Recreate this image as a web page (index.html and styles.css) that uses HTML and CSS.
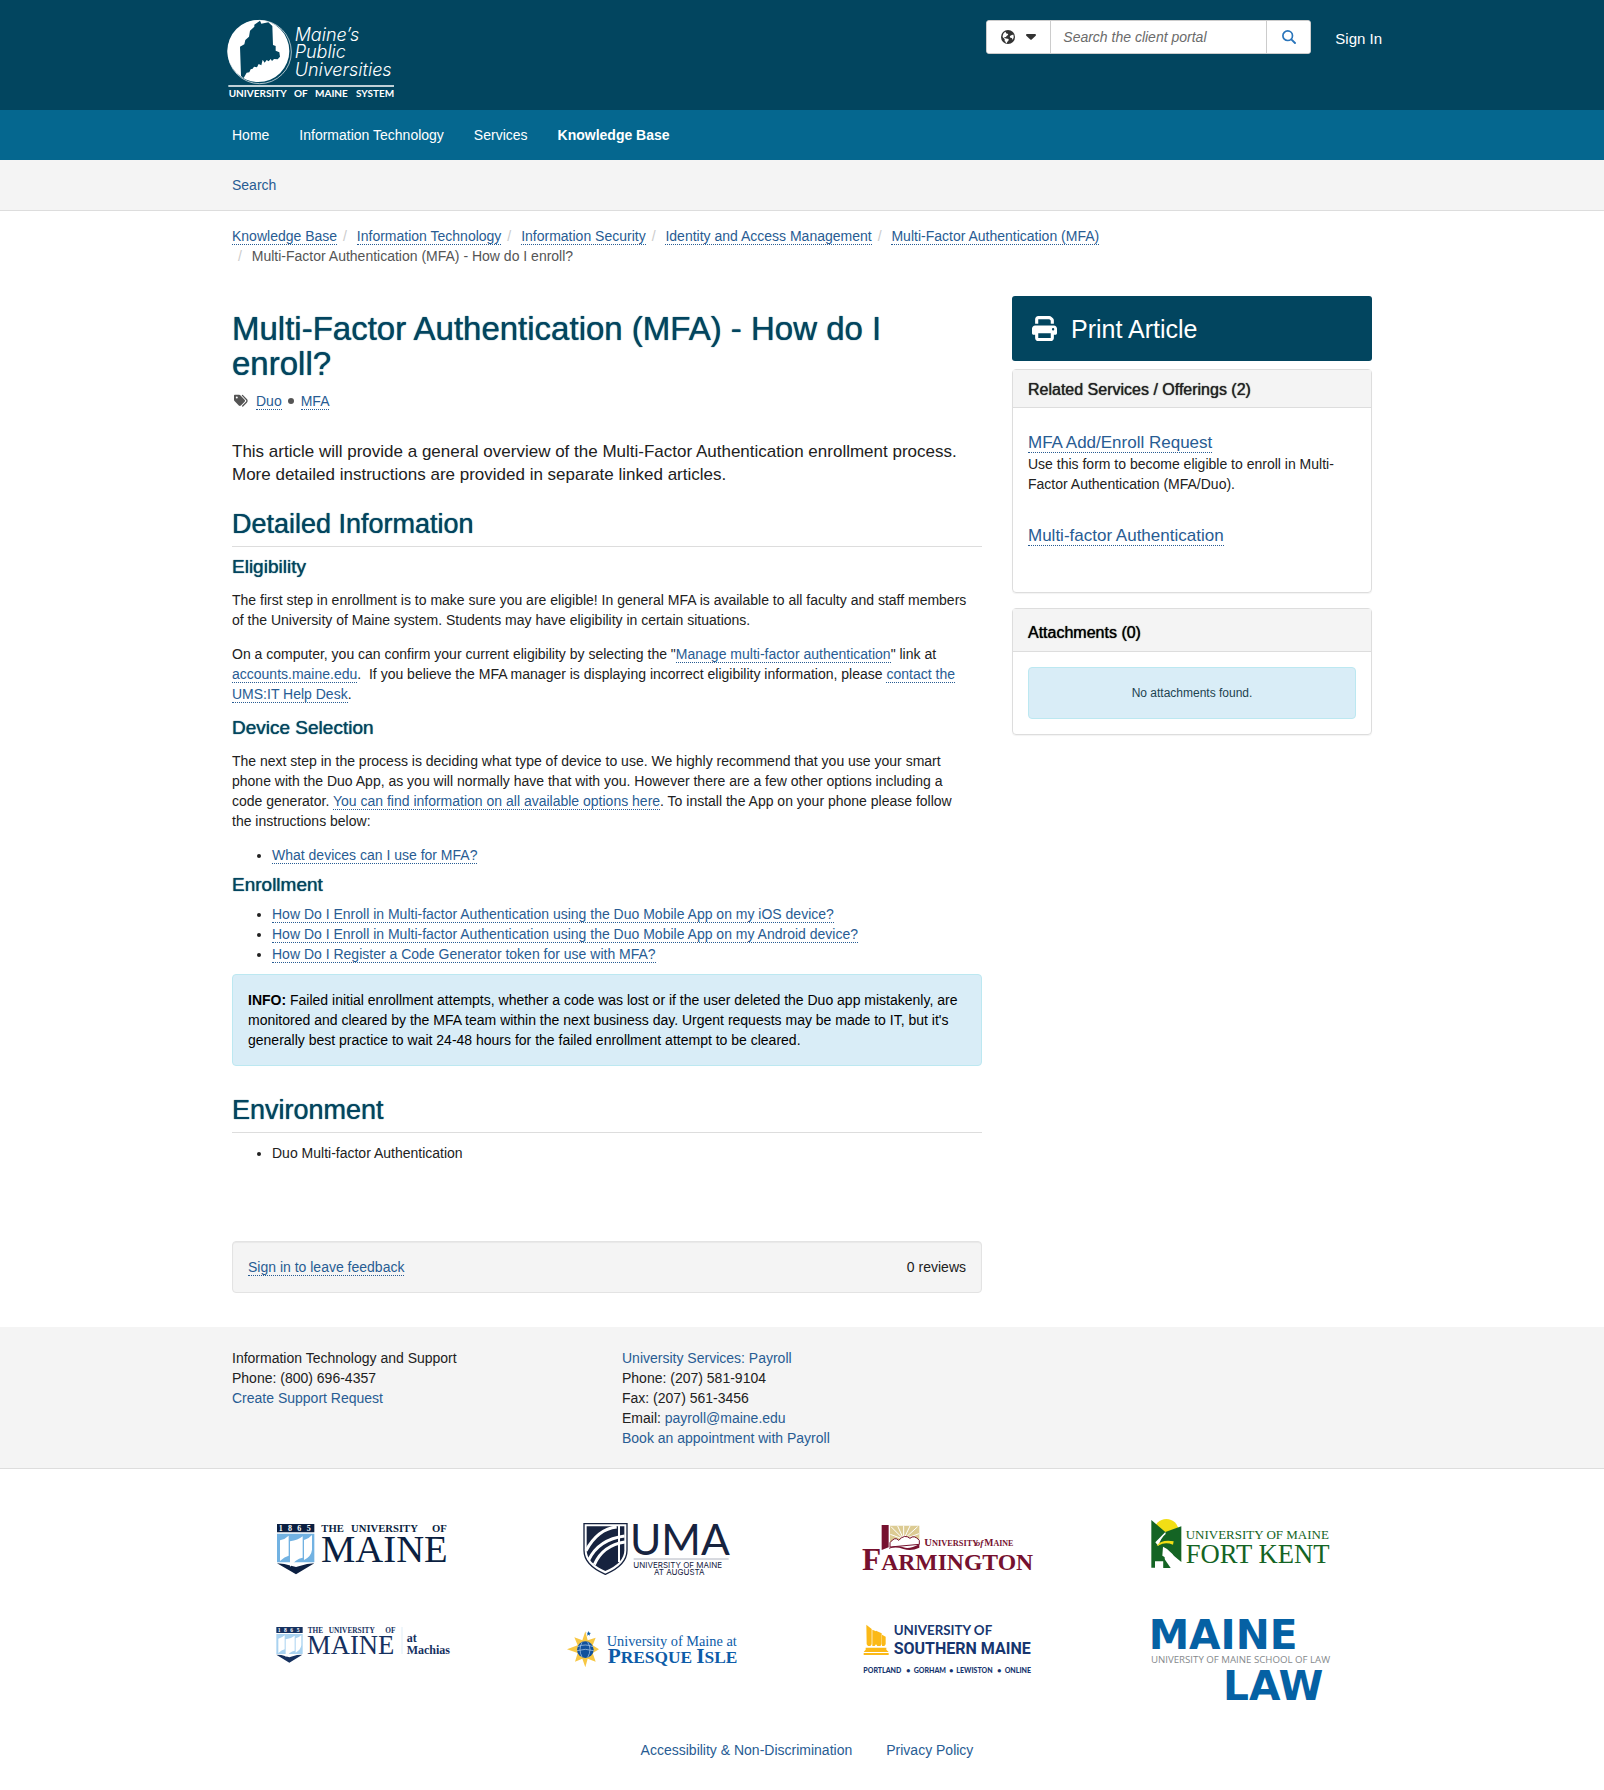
FILE: index.html
```html
<!DOCTYPE html>
<html lang="en">
<head>
<meta charset="utf-8">
<meta name="viewport" content="width=device-width, initial-scale=1">
<title>Article - Multi-Factor Authentication (MFA) - How do I enroll?</title>
<link rel="stylesheet" href="styles.css">
</head>
<body>
<header class="site-header">
  <div class="container header-row">
    <a class="brand" href="#" aria-label="University of Maine System">
      <svg width="168" height="80" viewBox="51 57 504 240">
        <circle cx="149" cy="156" r="95" fill="none" stroke="#fff" stroke-width="2"/>
        <circle cx="145" cy="153" r="93" fill="#fff"/>
        <path fill="#02455f" d="M150 62l4 9 21-4 12 11 2 57 8 3v14l11 5 2 13-7 8-11-1-6 6-4-6-6 7-6-4-6 8-6-9-4 17-8-4-5 10-9-2-4 6-6 2-4 9-8 1-9 16-8-6-3-88 13-7 3-13 11-10 3-18 13-12v-6z"/>
        <g class="wm-script">
          <text x="254" y="123">Maine’s</text>
          <text x="254" y="175">Public</text>
          <text x="254" y="228">Universities</text>
        </g>
        <path stroke="#fff" stroke-width="5" d="M55 258h497"/>
        <g class="wm-system">
          <text x="56" y="291">UNIVERSITY</text>
          <text x="252" y="291">OF</text>
          <text x="315" y="291">MAINE</text>
          <text x="438" y="291">SYSTEM</text>
        </g>
      </svg>
    </a>
    <div class="header-tools">
      <form class="search" role="search">
        <button class="search-filter" type="button" aria-label="Filter your search by category">
          <svg width="14" height="14" viewBox="0 0 512 512"><circle cx="256" cy="256" r="256" fill="#333"/><path fill="#fff" d="M58 258l64 62c8 8 12 18 12 30v40c0 14 8 26 20 32s20 18 20 34v10l40 20c0-40 12-50 30-66 26-22 40-40 40-60 0-28-20-40-44-42l-60-10c-14-6-26-20-44-20-16 0-22-12-12-22 12-12 28-20 40-8 10 10 26 6 26-10 0-24 10-28 28-38 18-12 34-24 40-40 8-20 0-36-20-36h-26l-28-20-18-54C110 80 60 150 58 258zM372 190c-22 4-40 22-48 44-6 22 10 44 34 48l28 6c18 4 26 18 24 34l-4 40c30-26 52-60 58-106 2-30-4-60-18-90l-40 20z"/></svg>
          <svg width="10" height="6" viewBox="0 0 10 6"><path fill="#333" d="M1 0h8a1 1 0 0 1 .7 1.700L5.700 5.500a1 1 0 0 1-1.400 0L.3 1.700A1 1 0 0 1 1 0z"/></svg>
        </button>
        <input class="search-input" type="text" placeholder="Search the client portal" aria-label="Search the client portal">
        <button class="search-go" type="submit" aria-label="Search">
          <svg width="14" height="14" viewBox="0 0 14 14" fill="none" stroke="#2a75bb" stroke-linecap="round"><circle cx="5.700" cy="5.700" r="4.800" stroke-width="1.700"/><path stroke-width="1.900" d="M9.300 9.300l3.700 3.700"/></svg>
        </button>
      </form>
      <a class="sign-in" href="#">Sign In</a>
    </div>
  </div>
</header>
<nav class="main-nav">
  <div class="container nav-row">
    <a href="#">Home</a>
    <a href="#">Information Technology</a>
    <a href="#">Services</a>
    <a class="current" href="#">Knowledge Base</a>
  </div>
</nav>
<nav class="sub-nav">
  <div class="container"><a href="#">Search</a></div>
</nav>

<main class="container">
  <ol class="breadcrumb">
    <li><a href="#">Knowledge Base</a></li><li><a href="#">Information Technology</a></li><li><a href="#">Information Security</a></li><li><a href="#">Identity and Access Management</a></li><li><a href="#">Multi-Factor Authentication (MFA)</a></li><li>Multi-Factor Authentication (MFA) - How do I enroll?</li>
  </ol>
  <div class="columns">
    <article class="article">
      <h1>Multi-Factor Authentication (MFA) - How do I enroll?</h1>
      <div class="tags">
        <svg width="14" height="14" viewBox="0 0 14 14"><path fill="#555" d="M0 1.800C0 1.200.5.800 1 .800h4.200c.4 0 .8.200 1.100.5l4.300 4.400c.6.600.6 1.500 0 2.100l-3.700 3.800c-.6.600-1.500.6-2.100 0L.5 7.100C.2 6.800 0 6.400 0 6zM2.800 4.600a1 1 0 1 0 0-2 1 1 0 0 0 0 2z"/><path fill="none" stroke="#555" stroke-width="1.300" stroke-linecap="round" d="M8.400 1.400l4 4.100c.8.800.8 1.900 0 2.700L8.700 12"/></svg>
        <a href="#">Duo</a><span class="dot"></span><a href="#">MFA</a>
      </div>
      <p class="lead">This article will provide a general overview of the Multi-Factor Authentication enrollment process. More detailed instructions are provided in separate linked articles.</p>
      <h2>Detailed Information</h2>
      <h3>Eligibility</h3>
      <p>The first step in enrollment is to make sure you are eligible! In general MFA is available to all faculty and staff members of the University of Maine system. Students may have eligibility in certain situations.</p>
      <p>On a computer, you can confirm your current eligibility by selecting the "<a href="#">Manage multi-factor authentication</a>" link at <a href="#">accounts.maine.edu</a>.&nbsp; If you believe the MFA manager is displaying incorrect eligibility information, please <a href="#">contact the UMS:IT Help Desk</a>.</p>
      <h3>Device Selection</h3>
      <p>The next step in the process is deciding what type of device to use. We highly recommend that you use your smart phone with the Duo App, as you will normally have that with you. However there are a few other options including a code generator. <a href="#">You can find information on all available options here</a>. To install the App on your phone please follow the instructions below:</p>
      <ul>
        <li><a href="#">What devices can I use for MFA?</a></li>
      </ul>
      <h3>Enrollment</h3>
      <ul>
        <li><a href="#">How Do I Enroll in Multi-factor Authentication using the Duo Mobile App on my iOS device?</a></li>
        <li><a href="#">How Do I Enroll in Multi-factor Authentication using the Duo Mobile App on my Android device?</a></li>
        <li><a href="#">How Do I Register a Code Generator token for use with MFA?</a></li>
      </ul>
      <div class="alert"><strong>INFO:</strong> Failed initial enrollment attempts, whether a code was lost or if the user deleted the Duo app mistakenly, are monitored and cleared by the MFA team within the next business day. Urgent requests may be made to IT, but it's generally best practice to wait 24-48 hours for the failed enrollment attempt to be cleared.</div>
      <h2>Environment</h2>
      <ul>
        <li>Duo Multi-factor Authentication</li>
      </ul>
      <div class="feedback"><a href="#">Sign in to leave feedback</a><span>0 reviews</span></div>
    </article>
    <aside class="sidebar">
      <button class="print" type="button">
        <svg width="25" height="25" viewBox="0 0 512 512" fill="#fff"><path d="M128 0C92.700 0 64 28.700 64 64v96h64V64h226.700L384 93.300V160h64V93.300c0-17-6.700-33.300-18.700-45.300L400 18.700C388 6.700 371.700 0 354.700 0H128zm256 352v96H128v-96h256zm64 32h32c17.700 0 32-14.300 32-32v-96c0-35.300-28.700-64-64-64H64c-35.300 0-64 28.700-64 64v96c0 17.700 14.300 32 32 32h32v64c0 35.300 28.700 64 64 64h256c35.300 0 64-28.700 64-64v-64zm-16-88a24 24 0 1 1 0-48 24 24 0 1 1 0 48z"/></svg>
        Print Article
      </button>
      <section class="panel">
        <h2 class="panel-title">Related Services / Offerings (2)</h2>
        <div class="panel-body services">
          <div class="service"><a href="#">MFA Add/Enroll Request</a><p>Use this form to become eligible to enroll in Multi-Factor Authentication (MFA/Duo).</p></div>
          <div class="service"><a href="#">Multi-factor Authentication</a></div>
        </div>
      </section>
      <section class="panel">
        <h2 class="panel-title tall">Attachments (0)</h2>
        <div class="panel-body"><div class="alert empty">No attachments found.</div></div>
      </section>
    </aside>
  </div>
</main>

<footer>
  <div class="contact">
    <div class="container contact-row">
      <div>Information Technology and Support<br>Phone: (800) 696-4357<br><a href="#">Create Support Request</a></div>
      <div><a href="#">University Services: Payroll</a><br>Phone: (207) 581-9104<br>Fax: (207) 561-3456<br>Email: <a href="#">payroll@maine.edu</a><br><a href="#">Book an appointment with Payroll</a></div>
    </div>
  </div>
  <div class="campuses">
    <a href="#" aria-label="The University of Maine">
      <svg width="180" height="65" viewBox="39 45 540 195">
        <path fill="#0b1f41" d="M51 72h112v25H51zM51 190l57 33 55-33-22 2-33 9-35-9z"/>
        <path fill="#72b2e2" d="M51 101h112v86H51z"/>
        <path fill="#fff" d="M60 121q15-3 26-14v60q-12 3-26 16zM90 124q24-3 38-15v64q-22 4-38 28zM132 120q14-3 24-15v44q-2 20-24 31z"/>
        <g class="serif white"><text class="s24 bold" x="56" y="93">1</text><text class="s24 bold" x="84" y="93">8</text><text class="s24 bold" x="112" y="93">6</text><text class="s24 bold" x="140" y="93">5</text></g>
        <g class="serif ink"><text class="s32 bold" x="184" y="96">THE</text><text class="s32 bold" x="273" y="96">UNIVERSITY</text><text class="s32 bold" x="516" y="96">OF</text><text class="s116" x="183" y="186">MAINE</text></g>
      </svg>
    </a>
    <a href="#" aria-label="University of Maine at Augusta">
      <svg width="180" height="65" viewBox="47 45 540 195">
        <path fill="#fff" stroke="#17233f" stroke-width="4" d="M101 71h129v80q0 45-65 72-64-27-64-72z"/>
        <path fill="#17233f" d="M109 79h113v72q0 38-57 62-56-24-56-62z"/>
        <path fill="none" stroke="#fff" stroke-width="9" d="M107 152q35-65 92-71M115 180q30-62 108-72M132 194q25-58 92-68"/>
        <path fill="none" stroke="#fff" stroke-width="6" d="M206 76v110"/>
        <g class="uma"><text class="sans s128" x="239" y="166">UMA</text><text class="inter s24" x="249" y="203">UNIVERSITY OF MAINE</text><text class="inter s24" x="311" y="226">AT AUGUSTA</text></g>
        <path stroke="#8a90a0" stroke-width="2" d="M250 177h285"/>
      </svg>
    </a>
    <a href="#" aria-label="University of Maine Farmington">
      <svg width="180" height="65" viewBox="55 45 540 195">
        <path fill="#76112f" d="M126 75h21v67l-21 8z"/>
        <path fill="#dccb93" d="M151 77h88v42l-88 10z"/>
        <path stroke="#fff" stroke-width="3" d="M192 118l-38-38M192 118l-18-40M192 118V77M192 118l19-40M192 118l42-38M192 118l-40-15M192 118l46-17"/>
        <path fill="#fff" stroke="#76112f" stroke-width="3" d="M151 128q15-20 26-7 18-20 34-6 12-12 28 6v12l-88 8z"/>
        <path fill="#76112f" d="M148 143q25-8 43-1t48-9v10q-25 12-48 4t-43-1z"/>
        <g class="serif maroon"><text x="254" y="139"><tspan class="s32 bold">U</tspan><tspan class="s25 bold">NIVERSITY</tspan></text><text class="s27 bold italic" x="408" y="139">of</text><text x="434" y="139"><tspan class="s29 bold">M</tspan><tspan class="s24 bold">AINE</tspan></text><text x="67" y="211"><tspan class="s94 bold">F</tspan><tspan class="s71 bold">ARMINGTON</tspan></text></g>
      </svg>
    </a>
    <a href="#" aria-label="University of Maine Fort Kent">
      <svg width="180" height="65" viewBox="62 45 540 195">
        <circle cx="108" cy="94" r="37" fill="#f2de15"/>
        <path fill="#146424" d="M63 60l42 36 48-17v107l-50-41v58H63z"/>
        <path fill="#fff" d="M105 96l-30 31 9 11q8-25 22-36zM98 140q30 11 50 62h-27q-8-28-25-35zM74 184h26v20H74z"/>
        <path fill="#146424" d="M99 172l22 32H99z"/>
        <path fill="#f2de15" d="M79 137q14-19 51-13l-2 10q-24-9-42 2z"/>
        <g class="serif forest"><text class="s39" x="166" y="116">UNIVERSITY OF MAINE</text><text class="s80" x="166" y="190">FORT KENT</text></g>
      </svg>
    </a>
    <a href="#" aria-label="The University of Maine at Machias">
      <svg width="180" height="90" viewBox="39 345 540 270">
        <path fill="#16315f" d="M49 381h79v18H49zM49 464l39 24 39-24-16 1-23 7-24-7z"/>
        <path fill="#a9d2f0" d="M49 402h79v60H49z"/>
        <path fill="#fff" d="M55 416q11-2 19-10v42q-9 2-19 11zM77 418q17-2 27-11v45q-16 3-27 20zM107 415q10-2 17-10v31q-2 14-17 22z"/>
        <g class="serif white"><text class="s17 bold" x="53" y="396">1</text><text class="s17 bold" x="72" y="396">8</text><text class="s17 bold" x="91" y="396">6</text><text class="s17 bold" x="110" y="396">5</text></g>
        <g class="serif machias"><text class="s22 bold" x="143" y="398">THE</text><text class="s22 bold" x="206" y="398">UNIVERSITY</text><text class="s22 bold" x="376" y="398">OF</text><text class="s80" x="141" y="462">MAINE</text><text class="s36 bold" x="440" y="426">at</text><text class="s36 bold" x="440" y="461">Machias</text></g>
        <path stroke="#cfe4f3" stroke-width="2" d="M426 381v81"/>
      </svg>
    </a>
    <a href="#" aria-label="University of Maine at Presque Isle">
      <svg width="180" height="90" viewBox="47 345 540 270">
        <path fill="#f7c744" d="M105 394l7 27 24-8-9 23 19 12-19 11 9 26-24-9-7 26-9-26-22 9 8-26-32-11 32-12-10-24 24 9z"/>
        <circle cx="105" cy="449" r="25" fill="#11519c"/>
        <path fill="none" stroke="#b9d5ef" stroke-width="2" d="M82 440q23-10 46 0M80 452q25-8 50 0M95 427q-12 22 0 44M112 426q14 22 0 46"/>
        <path fill="#0d5ca8" d="M115 393l2 5 5 1-4 3 1 5-4-3-5 3 2-6-4-3h5z"/>
        <g class="serif azure"><text class="s43" x="169" y="437">University of Maine at</text><text x="172" y="489"><tspan class="s64 bold">P</tspan><tspan class="s52 bold">RESQUE </tspan><tspan class="s64 bold">I</tspan><tspan class="s52 bold">SLE</tspan></text></g>
      </svg>
    </a>
    <a href="#" aria-label="University of Southern Maine">
      <svg width="180" height="90" viewBox="55 345 540 270">
        <path fill="#fbb917" d="M80 374l16 13v46l-4 5h-7l-4-5zM98 389l11 5v39l-4 5h-7zM109 392l17 8v33l-4 5h-9l-4-5zM127 404l11 6v23l-4 5h-7zM78 443h62v6l7 7H72l6-7zM72 459h75v6H72z"/>
        <g class="sans royal"><text class="s40 bold" x="162" y="406">UNIVERSITY OF</text><text class="roboto s48 bold" x="162" y="462">SOUTHERN MAINE</text><text class="s21 heavy" x="71" y="520">PORTLAND</text><text class="s21 heavy" x="200" y="520">•</text><text class="s21 heavy" x="222" y="520">GORHAM</text><text class="s21 heavy" x="329" y="520">•</text><text class="s21 heavy" x="350" y="520">LEWISTON</text><text class="s21 heavy" x="473" y="520">•</text><text class="s21 heavy" x="495" y="520">ONLINE</text></g>
      </svg>
    </a>
    <a href="#" aria-label="University of Maine School of Law">
      <svg width="180" height="90" viewBox="62 345 540 270">
        <g class="wide law"><text class="s122 bold" x="55" y="446">MAINE</text><text class="s122 bold" x="278" y="600">LAW</text></g>
        <text class="open s29 grey" x="62" y="489">UNIVERSITY OF MAINE SCHOOL OF LAW</text>
      </svg>
    </a>
  </div>
  <div class="legal"><a href="#">Accessibility &amp; Non-Discrimination</a><a href="#">Privacy Policy</a></div>
</footer>
</body>
</html>
```
FILE: styles.css
```css
* { box-sizing: border-box; }

body {
  margin: 0;
  background: #fff;
  color: #212121;
  font: 14px/20px "Liberation Sans", Arial, sans-serif;
}

a { color: #285c93; text-decoration: none; }
p { margin: 0; }
svg { display: block; }
button, input { font: inherit; }

.container {
  max-width: 1170px;
  margin: 0 auto;
  padding: 0 15px;
}

/* Header */
.site-header { background: #02455f; }
.header-row {
  display: flex;
  justify-content: space-between;
  align-items: flex-start;
  min-height: 110px;
}
.brand { margin: 19px 0 0 -5px; }
.header-tools { display: flex; align-items: center; padding-top: 20px; }
.search {
  display: flex;
  height: 34px;
  border: 1px solid #ccc;
  border-radius: 3px;
  background: #fff;
  overflow: hidden;
}
.search button { border: 0; background: #fff; display: flex; align-items: center; justify-content: center; }
.search-filter { width: 63px; gap: 11px; padding: 0; }
.search-go { width: 43px; padding: 0; }
.search-input {
  width: 217px;
  padding: 0 12px;
  border: solid #ccc;
  border-width: 0 1px;
  color: #333;
}
.search-input::placeholder { color: #6b6b6b; font-style: italic; opacity: 1; }
.sign-in { color: #fff; font-size: 15px; margin: 4px -10px 0 24px; }

.main-nav { background: #05678f; }
.nav-row { display: flex; gap: 30px; }
.main-nav a { color: #fff; line-height: 50px; }
.main-nav .current { font-weight: bold; }
.sub-nav { background: #f4f4f4; border-bottom: 1px solid #ddd; line-height: 50px; }

/* Breadcrumb */
.breadcrumb { list-style: none; margin: 0; padding: 15px 0 30px; color: #555; }
.breadcrumb li { display: inline-block; }
.breadcrumb li + li::before { content: "/\00a0"; color: #ccc; padding: 0 6px; }
main a { border-bottom: 1px dotted #285c93; }

/* Article */
.columns { display: grid; grid-template-columns: minmax(0, 750fr) minmax(0, 360fr); gap: 30px; }
.article { padding-top: 15px; }
h1, h2, h3 { margin: 0; font-weight: normal; color: #02455f; text-shadow: 0 0 1px currentColor; }
h1 { font-size: 33px; line-height: 35px; }
.tags { display: flex; align-items: center; margin: 10px 0 29px; padding-left: 2px; line-height: 16px; min-height: 20px; }
.tags svg { margin-right: 8px; }
.dot { width: 6px; height: 6px; margin: 0 7px 0 6px; border-radius: 50%; background: #555; }
.article p { padding-right: 10px; }
.lead { font-size: 17px; line-height: 23px; }
.article h2 {
  font-size: 27px;
  line-height: 29px;
  margin-top: 24px;
  padding-bottom: 7px;
  border-bottom: 1px solid #ddd;
}
.article .alert + h2 { margin-top: 30px; }
h3 { font-size: 19px; line-height: 20px; margin: 10px 0 13px; }
.article p + p { margin-top: 14px; }
.article p + h3 { margin-top: 14px; }
.article ul { margin: 0; padding-left: 40px; }
.article p + ul { margin-top: 14px; }
.article h3 + ul { margin-top: -4px; }
.article h2 + ul { margin-top: 10px; }
.alert {
  margin-top: 10px;
  padding: 15px;
  border: 1px solid #bce8f1;
  border-radius: 4px;
  background: #d9edf7;
  color: #000;
}
.feedback {
  display: flex;
  justify-content: space-between;
  align-items: center;
  min-height: 52px;
  margin: 78px 0 34px;
  padding: 15px;
  border: 1px solid #e3e3e3;
  border-radius: 4px;
  background: #f4f4f4;
  box-shadow: inset 0 1px 1px rgba(0, 0, 0, 0.05);
}
.feedback a { line-height: 16px; }

/* Sidebar */
.print {
  display: flex;
  align-items: center;
  gap: 14px;
  width: 100%;
  height: 65px;
  margin-bottom: 8px;
  padding: 0 20px;
  border: 0;
  border-radius: 3px;
  background: #02455f;
  color: #fff;
  font-size: 25px;
}
.panel {
  margin-bottom: 15px;
  border: 1px solid #ddd;
  border-radius: 4px;
  box-shadow: 0 1px 1px rgba(0, 0, 0, 0.05);
}
.panel-title {
  padding: 10px 15px 7px;
  border-bottom: 1px solid #ddd;
  background: #f4f4f4;
  color: #212121;
  font-size: 16px;
  line-height: 20px;
}
.panel-title.tall { padding: 14px 15px 8px; color: #000; }
.panel-body { padding: 15px; }
.services { padding: 25px 15px 46px; }
.service + .service { margin-top: 32px; }
.service a { font-size: 17px; }
.service p { margin-top: 1px; }
.alert.empty { margin: 0; text-align: center; font-size: 12px; color: #1c4350; }

/* Footer */
.contact { background: #f4f4f4; border-bottom: 1px solid #ddd; padding: 21px 0 20px; }
.contact-row { display: grid; grid-template-columns: repeat(3, 1fr); column-gap: 30px; }
.campuses {
  display: grid;
  grid-template-columns: repeat(4, 1fr);
  justify-items: center;
  row-gap: 35px;
  max-width: 1170px;
  margin: 0 auto;
  padding-top: 46px;
}
.legal { display: flex; justify-content: center; gap: 34px; padding: 35px 0 30px 10px; }

/* Campus wordmarks */
.wm-script { font-family: Inter, sans-serif; font-size: 54px; font-style: italic; font-weight: 300; fill: #fff; }
.wm-system { font-family: Lato, sans-serif; font-size: 30px; font-weight: 700; fill: #fff; }
.serif { font-family: "Liberation Serif", serif; }
.sans { font-family: Lato, sans-serif; }
.open { font-family: "Open Sans", sans-serif; }
.inter { font-family: Inter, sans-serif; }
.roboto { font-family: Roboto, sans-serif; }
.wide { font-family: "DejaVu Sans", sans-serif; }
.bold { font-weight: 700; }
.heavy { font-weight: 900; }
.italic { font-style: italic; }
.white { fill: #fff; }
.ink { fill: #0b1f41; }
.machias { fill: #16315f; }
.uma { fill: #17233f; }
.maroon { fill: #76112f; }
.forest { fill: #146424; }
.azure { fill: #0d5ca8; }
.royal { fill: #17366f; }
.law { fill: #0561a4; }
.grey { fill: #85898c; }
.s17 { font-size: 17px; }
.s21 { font-size: 21px; }
.s22 { font-size: 22px; }
.s24 { font-size: 24px; }
.s25 { font-size: 25px; }
.s27 { font-size: 27px; }
.s29 { font-size: 29px; }
.s32 { font-size: 32px; }
.s36 { font-size: 36px; }
.s39 { font-size: 39px; }
.s40 { font-size: 40px; }
.s43 { font-size: 43px; }
.s48 { font-size: 48px; }
.s52 { font-size: 52px; }
.s64 { font-size: 64px; }
.s71 { font-size: 71px; }
.s80 { font-size: 80px; }
.s94 { font-size: 94px; }
.s116 { font-size: 116px; }
.s122 { font-size: 122px; }
.s128 { font-size: 128px; }
```
